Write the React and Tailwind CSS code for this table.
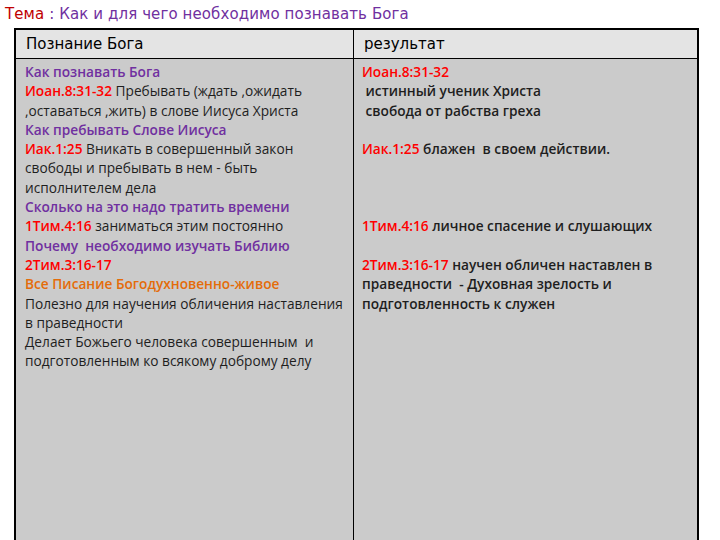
import React from 'react';

const purple = 'text-[#7030a0]';
const red = 'text-[#ff0000]';

const leftLines = [
  { parts: [{ t: 'Как познавать Бога', c: purple, b: true }] },
  { parts: [{ t: 'Иоан.8:31-32', c: red, b: true }, { t: ' Пребывать (ждать ,ожидать' }] },
  { parts: [{ t: ',оставаться ,жить) в слове Иисуса Христа' }] },
  { parts: [{ t: 'Как пребывать Слове Иисуса', c: purple, b: true }] },
  { parts: [{ t: 'Иак.1:25', c: red, b: true }, { t: ' Вникать в совершенный закон' }] },
  { parts: [{ t: 'свободы и пребывать в нем - быть' }] },
  { parts: [{ t: 'исполнителем дела' }] },
  { parts: [{ t: 'Сколько на это надо тратить времени', c: purple, b: true }] },
  { parts: [{ t: '1Тим.4:16', c: red, b: true }, { t: ' заниматься этим постоянно' }] },
  { parts: [{ t: 'Почему  необходимо изучать Библию', c: purple, b: true }] },
  { parts: [{ t: '2Тим.3:16-17', c: red, b: true }] },
  { parts: [{ t: 'Все Писание Богодухновенно-живое', c: 'text-[#e46c0a]', b: true }] },
  { parts: [{ t: 'Полезно для научения обличения наставления' }] },
  { parts: [{ t: 'в праведности' }] },
  { parts: [{ t: 'Делает Божьего человека совершенным  и' }] },
  { parts: [{ t: 'подготовленным ко всякому доброму делу' }] },
];

const rightLines = [
  { parts: [{ t: 'Иоан.8:31-32', c: red }] },
  { parts: [{ t: ' истинный ученик Христа' }] },
  { parts: [{ t: ' свобода от рабства греха' }] },
  { parts: [] },
  { parts: [{ t: 'Иак.1:25', c: red }, { t: ' блажен  в своем действии.' }] },
  { parts: [] },
  { parts: [] },
  { parts: [] },
  { parts: [{ t: '1Тим.4:16', c: red }, { t: ' личное спасение и слушающих' }] },
  { parts: [] },
  { parts: [{ t: '2Тим.3:16-17', c: red }, { t: ' научен обличен наставлен в' }] },
  { parts: [{ t: 'праведности  - Духовная зрелость и' }] },
  { parts: [{ t: 'подготовленность к служен' }] },
];

const Line = ({ line, bold }) => (
  <div className="h-[19.3px] whitespace-pre">
    {line.parts.map((p, i) => (
      <span key={i} className={`${p.c || 'text-[#1e1e1e]'} ${p.b || bold ? 'font-semibold' : ''}`}>
        {p.t}
      </span>
    ))}
  </div>
);

const App = () => {
  return (
    <div className="w-[720px] h-[540px] overflow-hidden bg-white font-['Open_Sans',sans-serif]">
      <div className="pl-[5px] pt-[3px] h-[28px] text-[15px] font-['DejaVu_Sans',sans-serif] tracking-[0.1px]">
        <span className="text-[#c00000]">Тема</span>
        <span className="text-[#7030a0]"> : Как  и для чего необходимо познавать  Бога</span>
      </div>

      <div className="ml-[14px] w-[685px] border-2 border-black border-b-0 h-[520px] flex flex-col">
        <div className="grid grid-cols-[338px_1fr] h-[29px] bg-[#e4e4e4] border-b border-black">
          <div className="border-r border-black pl-[10px] flex items-center text-[15px] font-['DejaVu_Sans',sans-serif] text-black">
            Познание Бога
          </div>
          <div className="pl-[10px] flex items-center text-[15px] font-['DejaVu_Sans',sans-serif] text-black">
            результат
          </div>
        </div>
        <div className="grid grid-cols-[338px_1fr] flex-1 bg-[#cbcbcb] text-[13.7px] leading-[19.3px]">
          <div className="border-r border-black pl-[9px] pt-[3px]">
            {leftLines.map((l, i) => (
              <Line key={i} line={l} />
            ))}
          </div>
          <div className="pl-[8px] pt-[3px]">
            {rightLines.map((l, i) => (
              <Line key={i} line={l} bold />
            ))}
          </div>
        </div>
      </div>
    </div>
  );
};

export default App;
